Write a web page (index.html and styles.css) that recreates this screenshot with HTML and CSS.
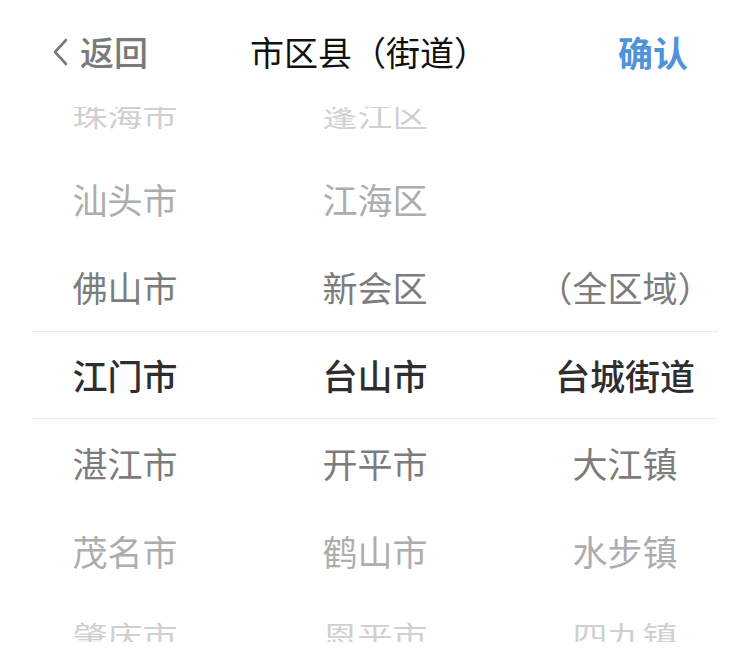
FILE: index.html
```html
<!DOCTYPE html>
<html lang="zh-CN">
<head>
<meta charset="utf-8">
<link rel="stylesheet" href="styles.css">
</head>
<body>
<div class="sheet">
  <header class="bar">
    <div class="back">
      <svg class="chev" width="20" height="30" viewBox="0 0 20 30"><polyline points="16,3 5,15 16,27" fill="none" stroke="#7a7a7a" stroke-width="2.6" stroke-linecap="round" stroke-linejoin="round"/></svg>
      <span>返回</span>
    </div>
    <div class="title">市区县（街道）</div>
    <div class="ok">确认</div>
  </header>
  <div class="picker">
    <div class="list">
      <div class="row far top"><span>珠海市</span><span>蓬江区</span><span></span></div>
      <div class="row mid"><span>汕头市</span><span>江海区</span><span></span></div>
      <div class="row near"><span>佛山市</span><span>新会区</span><span>（全区域）</span></div>
      <div class="row sel"><span>江门市</span><span>台山市</span><span>台城街道</span></div>
      <div class="row near"><span>湛江市</span><span>开平市</span><span>大江镇</span></div>
      <div class="row mid"><span>茂名市</span><span>鹤山市</span><span>水步镇</span></div>
      <div class="row far bottom"><span>肇庆市</span><span>恩平市</span><span>四九镇</span></div>
    </div>
  </div>
</div>
</body>
</html>
```
FILE: styles.css
```css
html, body {
  margin: 0;
  padding: 0;
  background: #ffffff;
}
body {
  font-family: "Noto Sans CJK SC", "Noto Sans", sans-serif;
  width: 750px;
  height: 668px;
  overflow: hidden;
}
.sheet {
  width: 750px;
  height: 668px;
  background: #fff;
}
.bar {
  height: 107px;
  display: grid;
  grid-template-columns: 1fr auto 1fr;
  align-items: center;
  padding: 0 62px 4px 50px;
  box-sizing: border-box;
}
.back {
  display: flex;
  align-items: center;
  gap: 10px;
  color: #7a7a7a;
  font-size: 34px;
  font-weight: 500;
  justify-self: start;
}
.chev {
  display: block;
}
.title {
  font-size: 34px;
  color: #111;
  font-weight: 400;
}
.ok {
  justify-self: end;
  color: #4f93dd;
  font-size: 35px;
  font-weight: 700;
}
.picker {
  height: 535px;
  overflow: hidden;
}
.list {
  margin-top: -40px;
}
.row {
  position: relative;
  height: 88px;
  display: grid;
  grid-template-columns: 250px 250px 250px;
  align-items: center;
  font-size: 35px;
  color: #777;
}
.row span {
  text-align: center;
  line-height: 88px;
}
.row.sel {
  color: #2e2e2e;
  font-weight: 500;
}
.row.sel::before,
.row.sel::after {
  content: "";
  position: absolute;
  left: 32px;
  right: 32px;
  height: 1px;
  background: #ebebeb;
}
.row.sel::before { top: 0; }
.row.sel::after { bottom: 0; }
.row.near { color: #7c7c7c; }
.row.mid { color: #adadad; }
.row.far { color: #d0d0d0; }
.row.far span {
  transform: scaleY(0.78);
}
.row.top span { transform-origin: 50% 72%; }
.row.bottom span { transform-origin: 50% 28%; }
```
